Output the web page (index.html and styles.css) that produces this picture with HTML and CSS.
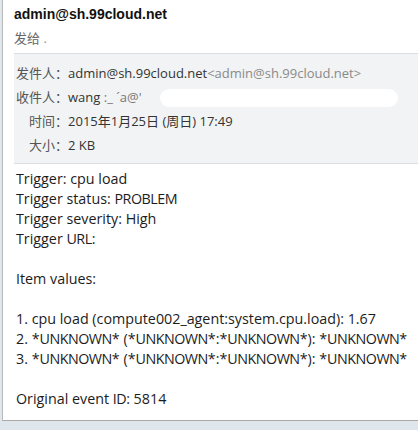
FILE: index.html
```html
<!DOCTYPE html>
<html lang="zh-CN">

<head>
    <meta charset="UTF-8" />
    <title>admin@sh.99cloud.net</title>
    <link rel="stylesheet" href="styles.css">
</head>

<body>
    <div class="mail">
        <div class="mail-head">
            <h1 class="sender">admin@sh.99cloud.net</h1>
            <div class="sent-to">发给 <span class="dot">.</span></div>
        </div>

        <table class="meta">
            <tr>
                <th>发件人：</th>
                <td>admin@sh.99cloud.net<span class="addr">&lt;admin@sh.99cloud.net&gt;</span></td>
            </tr>
            <tr>
                <th>收件人：</th>
                <td class="to">wang <span class="fuzz">:_ ´a@'</span><span class="blot"></span></td>
            </tr>
            <tr>
                <th>时间：</th>
                <td>2015年1月25日 (周日) 17:49</td>
            </tr>
            <tr>
                <th>大小：</th>
                <td>2 KB</td>
            </tr>
        </table>

        <div class="mail-body">
            <p>Trigger: cpu load<br>
                Trigger status: <span class="caps">PROBLEM</span><br>
                Trigger severity: High<br>
                Trigger <span class="caps">URL</span>:</p>
            <p>Item values:</p>
            <p>1. cpu load (compute002_agent:system.cpu.load): 1.67<br>
                2. *<span class="caps">UNKNOWN</span>* (*<span class="caps">UNKNOWN</span>*:*<span class="caps">UNKNOWN</span>*): *<span class="caps">UNKNOWN</span>*<br>
                3. *<span class="caps">UNKNOWN</span>* (*<span class="caps">UNKNOWN</span>*:*<span class="caps">UNKNOWN</span>*): *<span class="caps">UNKNOWN</span>*</p>
            <p>Original event <span class="caps">ID</span>: 5814</p>
        </div>
    </div>
</body>

</html>
```

FILE: styles.css
```css
html,
body {
    margin: 0;
    height: 100%;
    background: #dfe6ec;
    overflow: hidden;
}

body {
    font-family: "Open Sans", "Noto Sans CJK SC", sans-serif;
    color: #222;
}

.mail {
    height: 420px;
    margin-left: 2px;
    background: #fff;
    border-left: 1px solid #b9b9b9;
    border-bottom: 1px solid #a9a9a9;
    overflow: hidden;
}

.mail-head {
    padding: 4px 0 0 11px;
}

.sender {
    margin: 0;
    font-family: "Liberation Sans", Arial, sans-serif;
    font-size: 14px;
    font-weight: bold;
    line-height: 20px;
    color: #111;
}

.sent-to {
    margin-top: 5px;
    font-size: 13px;
    line-height: 18px;
    color: #666;
}

.dot {
    color: #999;
}

.meta {
    margin: 6px 0 0 11px;
    width: calc(100% - 11px);
    border-collapse: collapse;
    background: #f1f3f4;
    border-top: 1px solid #dcdedf;
    border-bottom: 1px solid #dcdedf;
    font-size: 13px;
    color: #333;
}

.meta tr:first-child th,
.meta tr:first-child td {
    padding-top: 10px;
}

.meta tr:last-child th,
.meta tr:last-child td {
    padding-bottom: 9px;
}

.meta th {
    width: 52px;
    padding: 3px 0 3px 2px;
    text-align: right;
    font-weight: normal;
    color: #555;
    white-space: nowrap;
    line-height: 18px;
}

.meta td {
    padding: 3px 0;
    line-height: 18px;
    white-space: nowrap;
}

.addr {
    color: #8a8a8a;
}

.to {
    position: relative;
}

.fuzz {
    color: #777;
}

.blot {
    position: absolute;
    left: 92px;
    top: 4px;
    width: 238px;
    height: 18px;
    background: #fff;
    border-radius: 9px;
}

.mail-body {
    padding: 5px 0 0 13px;
    font-size: 14.3px;
    line-height: 20px;
    color: #1c1c1c;
    white-space: nowrap;
}

.mail-body p {
    margin: 0 0 20px;
}

/* segoe-like caps are narrower than open sans */
.caps {
    letter-spacing: -0.5px;
}
```
